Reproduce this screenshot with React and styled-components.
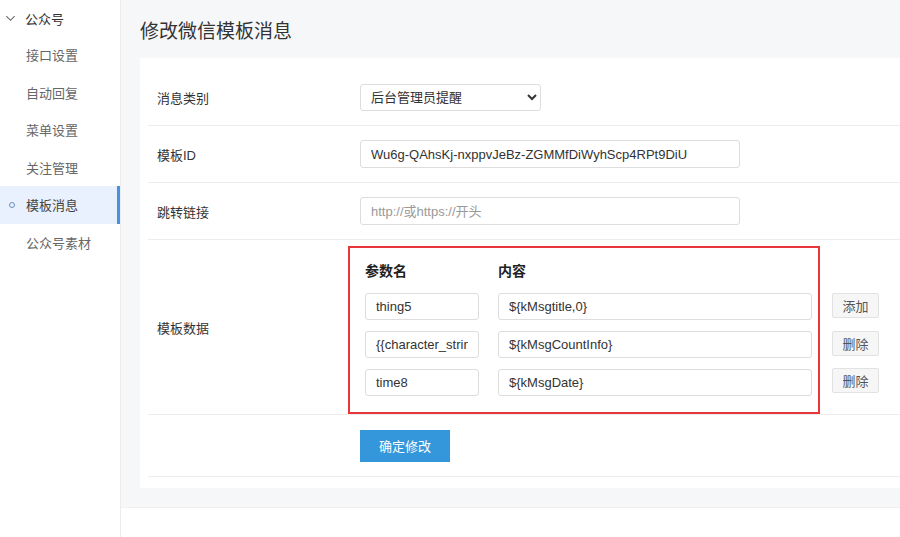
import styled, { createGlobalStyle } from 'styled-components';

const GlobalStyle = createGlobalStyle`
  html, body {
    margin: 0;
    padding: 0;
    background: #fff;
    font-family: "Liberation Sans", "Noto Sans CJK SC", sans-serif;
  }
  * { box-sizing: border-box; }
`;

const menuItems = ['接口设置', '自动回复', '菜单设置', '关注管理', '模板消息', '公众号素材'];

const params = [
  { name: 'thing5', value: '${kMsgtitle,0}', action: '添加' },
  { name: '{{character_string6.DATA}}', value: '${kMsgCountInfo}', action: '删除' },
  { name: 'time8', value: '${kMsgDate}', action: '删除' },
];

const App = () => {
  return (
    <Page>
      <GlobalStyle />
      <Sidebar>
        <GroupTitle>
          <svg width="11" height="11" viewBox="0 0 12 12">
            <path d="M1.5 3.5 L6 8 L10.5 3.5" fill="none" stroke="#666" strokeWidth="1.2" />
          </svg>
          <span>公众号</span>
        </GroupTitle>
        {menuItems.map((item) => (
          <MenuItem key={item} active={item === '模板消息'}>
            {item === '模板消息' && <Dot />}
            {item}
          </MenuItem>
        ))}
      </Sidebar>
      <Main>
        <Content>
          <Title>修改微信模板消息</Title>
          <Card>
            <Row>
              <Label>消息类别</Label>
              <Select defaultValue="admin">
                <option value="admin">后台管理员提醒</option>
              </Select>
            </Row>
            <Row>
              <Label>模板ID</Label>
              <Input defaultValue="Wu6g-QAhsKj-nxppvJeBz-ZGMMfDiWyhScp4RPt9DiU" />
            </Row>
            <Row>
              <Label>跳转链接</Label>
              <Input placeholder="http://或https://开头" />
            </Row>
            <Row tall>
              <Label>模板数据</Label>
              <DataArea>
                <RedFrame>
                  <HeadRow>
                    <HeadCell narrow>参数名</HeadCell>
                    <HeadCell>内容</HeadCell>
                  </HeadRow>
                  {params.map((p) => (
                    <ParamRow key={p.name}>
                      <SmallInput width="114px" defaultValue={p.name} />
                      <SmallInput width="314px" defaultValue={p.value} />
                    </ParamRow>
                  ))}
                </RedFrame>
                <ActionColumn>
                  {params.map((p) => (
                    <GhostButton key={p.name}>{p.action}</GhostButton>
                  ))}
                </ActionColumn>
              </DataArea>
            </Row>
            <Row submit>
              <Label />
              <PrimaryButton>确定修改</PrimaryButton>
            </Row>
          </Card>
        </Content>
        <Footer />
      </Main>
    </Page>
  );
};

const Page = styled.div`
  display: flex;
  width: 900px;
  height: 537px;
  overflow: hidden;
  font-family: "Liberation Sans", "Noto Sans CJK SC", sans-serif;
`;

const Sidebar = styled.aside`
  width: 121px;
  flex-shrink: 0;
  background: #fff;
  border-right: 1px solid #ececec;
`;

const GroupTitle = styled.div`
  display: flex;
  align-items: center;
  gap: 9px;
  height: 36px;
  padding-left: 5px;
  font-size: 13px;
  color: #333;
`;

const MenuItem = styled.div`
  position: relative;
  display: flex;
  align-items: center;
  height: 37.5px;
  padding-left: 26px;
  font-size: 13px;
  color: ${(p) => (p.active ? '#444' : '#666')};
  background: ${(p) => (p.active ? '#e8f1fd' : 'transparent')};
  border-right: 3px solid ${(p) => (p.active ? '#4a90e2' : 'transparent')};
`;

const Dot = styled.span`
  position: absolute;
  left: 9px;
  top: 50%;
  width: 6px;
  height: 6px;
  margin-top: -3px;
  border: 1px solid #6b8fb8;
  border-radius: 50%;
`;

const Main = styled.main`
  flex: 1;
  display: flex;
  flex-direction: column;
  min-width: 0;
`;

const Content = styled.div`
  height: 507px;
  background: #f6f7f9;
  padding: 0 0 0 19px;
`;

const Footer = styled.div`
  flex: 1;
  background: #fff;
  border-top: 1px solid #f0f0f0;
`;

const Title = styled.h1`
  margin: 0;
  height: 58px;
  line-height: 64px;
  font-size: 19px;
  font-weight: 400;
  color: #333;
`;

const Card = styled.div`
  background: #fff;
  padding: 11px 0 11px 8px;
  width: 780px;
`;

const Row = styled.div`
  display: flex;
  align-items: ${(p) => (p.tall ? 'stretch' : 'center')};
  height: ${(p) => (p.tall ? '175px' : p.submit ? '62px' : '57px')};
  border-bottom: 1px solid #ececec;
`;

const Label = styled.div`
  display: flex;
  align-items: center;
  width: 212px;
  flex-shrink: 0;
  padding-left: 9px;
  font-size: 13px;
  color: #333;
`;

const Select = styled.select`
  width: 181px;
  height: 27px;
  padding: 0 6px;
  font-family: "Liberation Sans", "Noto Sans CJK SC", sans-serif;
  font-size: 13px;
  color: #333;
  background: #fff;
  border: 1px solid #ddd;
  border-radius: 3px;
  outline: none;
`;

const Input = styled.input`
  width: 380px;
  height: 28px;
  padding: 0 10px;
  font-family: "Liberation Sans", "Noto Sans CJK SC", sans-serif;
  font-size: 13px;
  color: #333;
  border: 1px solid #ddd;
  border-radius: 3px;
  outline: none;

  &::placeholder {
    color: #999;
  }
`;

const DataArea = styled.div`
  display: flex;
  align-items: flex-start;
  margin-left: -12px;
  padding-top: 6px;
`;

const RedFrame = styled.div`
  width: 472px;
  height: 168px;
  border: 2px solid #e8363a;
  padding: 14px 6px 0 15px;
`;

const HeadRow = styled.div`
  display: flex;
  gap: 19px;
  margin-bottom: 12px;
`;

const HeadCell = styled.div`
  width: ${(p) => (p.narrow ? '114px' : '314px')};
  line-height: 19px;
  font-size: 14px;
  font-weight: 700;
  color: #222;
`;

const ParamRow = styled.div`
  display: flex;
  gap: 19px;
  margin-bottom: 11px;
`;

const SmallInput = styled(Input)`
  width: ${(p) => p.width};
  height: 27px;
`;

const ActionColumn = styled.div`
  display: flex;
  flex-direction: column;
  gap: 12.5px;
  margin-left: 12px;
  padding-top: 47px;
`;

const GhostButton = styled.button`
  width: 47px;
  height: 25px;
  padding: 0;
  font-family: "Liberation Sans", "Noto Sans CJK SC", sans-serif;
  font-size: 13px;
  color: #555;
  background: #f6f6f6;
  border: 1px solid #e2e2e2;
  border-radius: 2px;
`;

const PrimaryButton = styled.button`
  width: 90px;
  height: 32px;
  padding: 0;
  font-family: "Liberation Sans", "Noto Sans CJK SC", sans-serif;
  font-size: 13px;
  color: #fff;
  background: #3497dc;
  border: none;
  border-radius: 0;
`;

export default App;
